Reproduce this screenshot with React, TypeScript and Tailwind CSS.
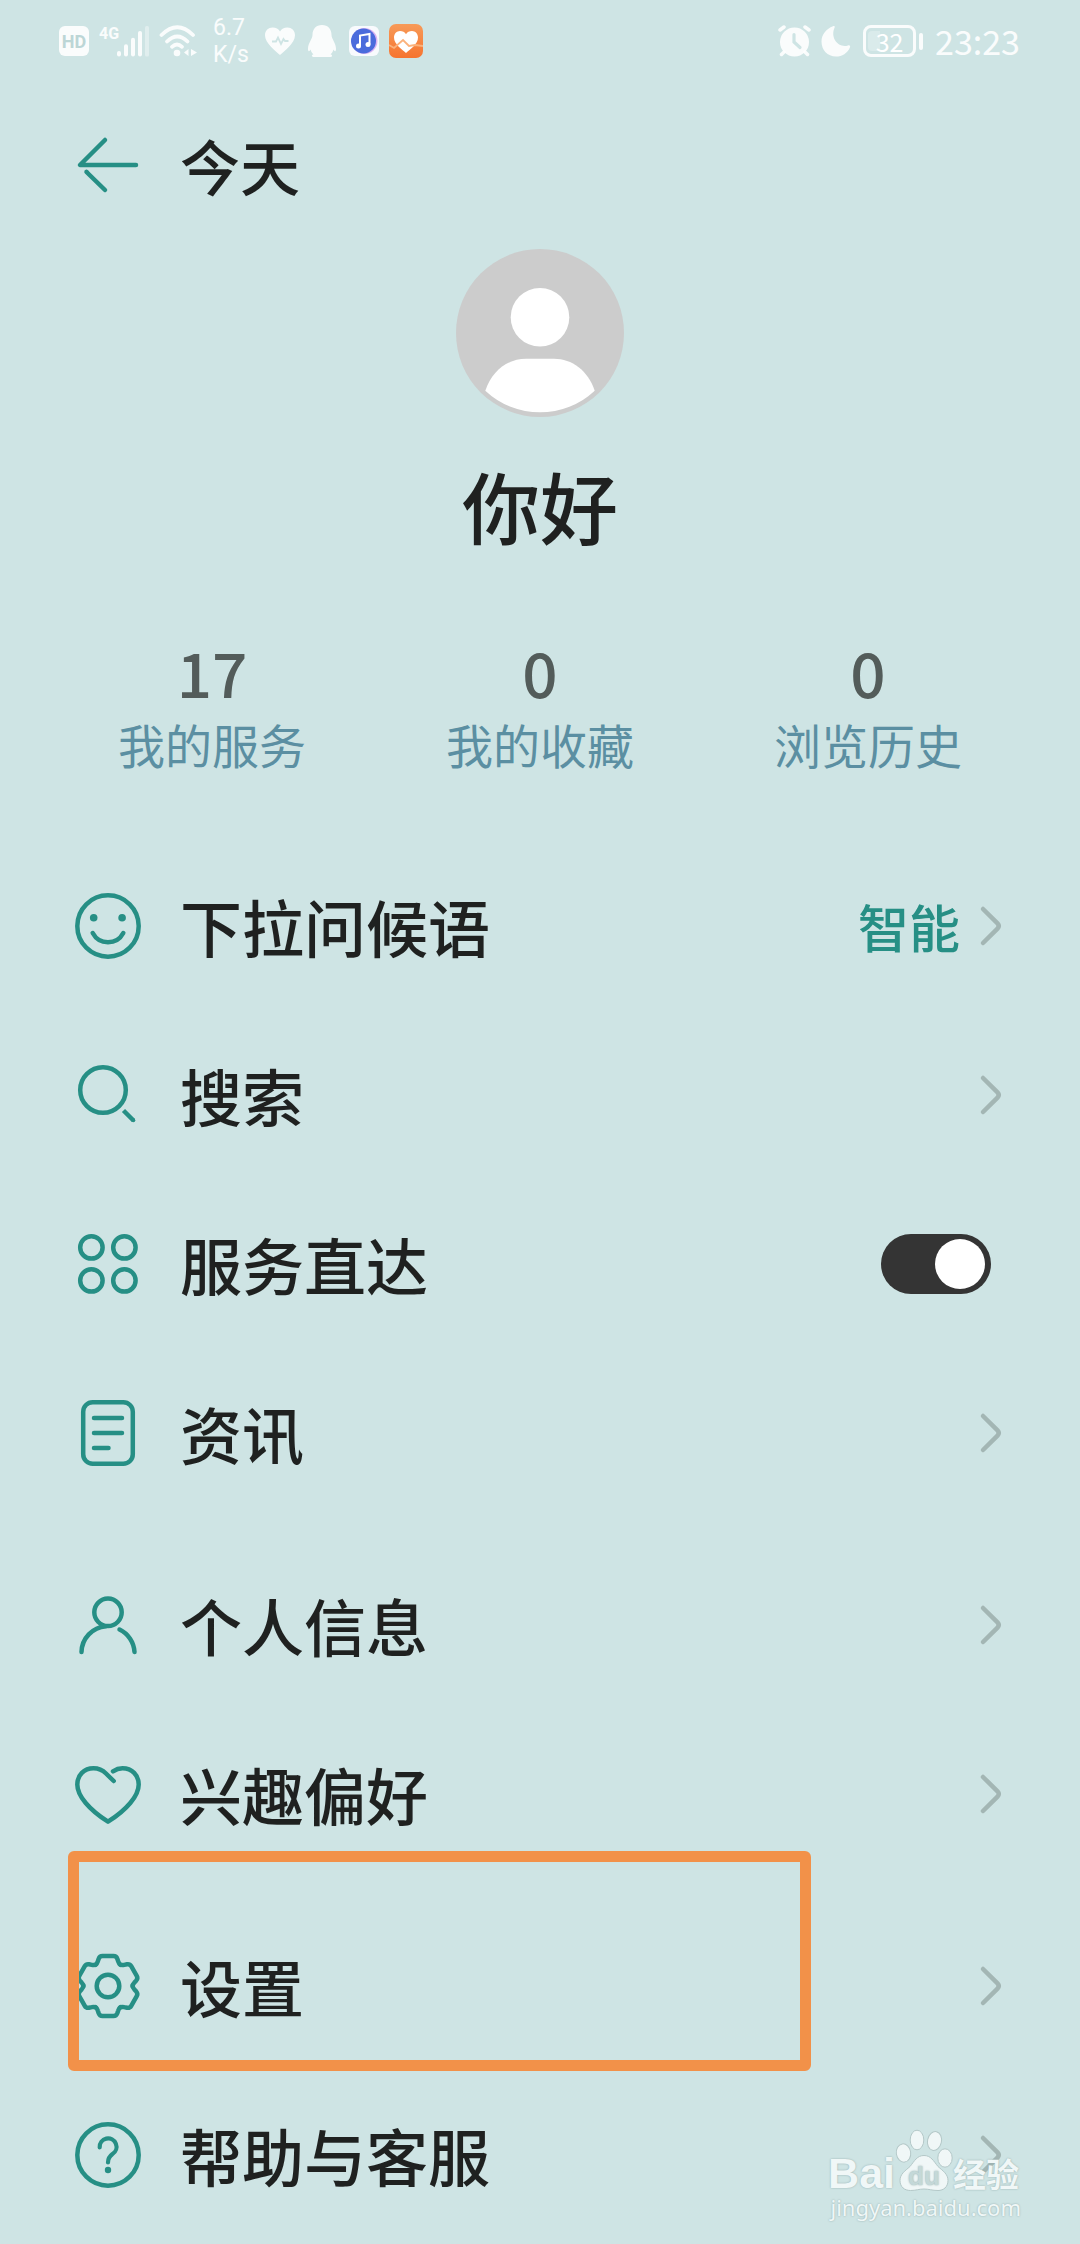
import React, { useState } from "react";

interface Stat {
  label: string;
  count: number;
}

interface MenuItem {
  id: string;
  label: string;
  icon: React.ReactNode;
  value?: string;
  toggle?: boolean;
  highlighted?: boolean;
}

const stats: Stat[] = [
  { label: "我的服务", count: 17 },
  { label: "我的收藏", count: 0 },
  { label: "浏览历史", count: 0 },
];

const LineIcon = ({ children }: { children: React.ReactNode }) => (
  <svg
    viewBox="0 0 72 72"
    className="h-[72px] w-[72px] shrink-0 text-[#268f85]"
    fill="none"
    stroke="currentColor"
    strokeWidth="4.5"
    strokeLinecap="round"
    strokeLinejoin="round"
    aria-hidden="true"
  >
    {children}
  </svg>
);

// One tooth of the gear, repeated every 60 degrees
const GEAR_TOOTH =
  "M-12.5 -21.2Q-10.9 -22.2 -10.2 -24.6L-9.3 -27.3Q-8.3 -30 -5.5 -30H5.5Q8.3 -30 9.3 -27.3L10.2 -24.6Q10.9 -22.2 12.5 -21.2";

const menuGroups: MenuItem[][] = [
  [
    {
      id: "greeting",
      label: "下拉问候语",
      value: "智能",
      icon: (
        <LineIcon>
          <circle cx="36" cy="36" r="30.7" />
          <circle cx="21.7" cy="27.7" r="3.8" fill="currentColor" stroke="none" />
          <circle cx="50.1" cy="27.7" r="3.8" fill="currentColor" stroke="none" />
          <path d="M20.7 43A17.3 17.3 0 0 0 51.3 43" />
        </LineIcon>
      ),
    },
    {
      id: "search",
      label: "搜索",
      icon: (
        <LineIcon>
          <circle cx="31" cy="31" r="22.8" />
          <path d="M51.5 51.5L61.5 61.5" strokeLinecap="butt" />
          <circle cx="61.3" cy="61.3" r="2" fill="currentColor" stroke="none" />
        </LineIcon>
      ),
    },
    {
      id: "direct",
      label: "服务直达",
      toggle: true,
      icon: (
        <LineIcon>
          <circle cx="19.4" cy="19.4" r="11.2" />
          <circle cx="52.4" cy="19.4" r="11.2" />
          <circle cx="19.4" cy="52.4" r="11.2" />
          <circle cx="52.4" cy="52.4" r="11.2" />
        </LineIcon>
      ),
    },
    {
      id: "news",
      label: "资讯",
      icon: (
        <LineIcon>
          <rect x="11.2" y="5.2" width="49.6" height="61.6" rx="9.5" />
          <path d="M22 21H50M22 36H50M22 51H36.5" />
        </LineIcon>
      ),
    },
  ],
  [
    {
      id: "profile",
      label: "个人信息",
      icon: (
        <LineIcon>
          <circle cx="36" cy="23.3" r="13.7" />
          <path d="M9.5 63A26.5 26.5 0 0 1 34 37.2" />
          <path d="M47.5 40.5A26.5 26.5 0 0 1 62.5 63" />
        </LineIcon>
      ),
    },
    {
      id: "interests",
      label: "兴趣偏好",
      icon: (
        <LineIcon>
          <path d="M41.7 23L34 15.5C30.5 12 26.5 10.3 21.5 10.3C12 10.3 5.3 17.3 5.3 26.5C5.3 38 17.5 52 36 63.7C54.5 52 66.7 38 66.7 26.5C66.7 17.3 60 10.3 50.5 10.3C47 10.3 44 11.3 41 13.3" />
        </LineIcon>
      ),
    },
  ],
  [
    {
      id: "settings",
      label: "设置",
      highlighted: true,
      icon: (
        <LineIcon>
          <circle cx="36" cy="36" r="11.3" />
          <g transform="translate(36 36)">
            {[0, 60, 120, 180, 240, 300].map((deg) => (
              <path key={deg} d={GEAR_TOOTH} transform={`rotate(${deg})`} />
            ))}
          </g>
        </LineIcon>
      ),
    },
    {
      id: "help",
      label: "帮助与客服",
      icon: (
        <LineIcon>
          <circle cx="36" cy="36" r="30.7" />
          <path d="M27.7 28.3A8.4 8.4 0 1 1 40.5 35Q36 38.3 36 43.5" strokeWidth="4.2" />
          <circle cx="36" cy="51" r="3.2" fill="currentColor" stroke="none" />
        </LineIcon>
      ),
    },
  ],
];

const StatusBar = () => (
  <div className="flex h-[82px] items-center justify-between pl-[59px] pr-[60px] text-white/90">
    <div className="flex items-center">
      <span className="flex h-[30px] w-[30px] items-center justify-center rounded-md bg-white/90 font-[Roboto] text-[18px] font-bold text-[#bcd6d6]">
        HD
      </span>
      <svg viewBox="0 0 50 32" className="ml-2.5 h-8 w-[50px]" fill="currentColor">
        <text x="0" y="14" fontFamily="Roboto, sans-serif" fontWeight="700" fontSize="16">
          4G
        </text>
        <rect x="18" y="26" width="4" height="5.5" rx="2" />
        <rect x="25" y="19.3" width="4" height="12.2" rx="2" />
        <rect x="32" y="12.8" width="4" height="18.7" rx="2" />
        <rect x="39" y="6" width="4" height="25.5" rx="2" />
        <rect x="46" y="1" width="4" height="30.5" rx="1.5" opacity="0.4" />
      </svg>
      <svg
        viewBox="0 0 40 32"
        className="ml-2.5 h-8 w-10"
        fill="none"
        stroke="currentColor"
        strokeWidth="3.8"
        strokeLinecap="round"
      >
        <path d="M2.5 10Q18.3 -5.5 34 10" />
        <path d="M8 16.5Q18.3 6.5 28.5 16.5" />
        <path d="M13 21.8Q18 17.2 23 21.8" />
        <circle cx="18" cy="28" r="3.3" fill="currentColor" stroke="none" />
        <path d="M29.5 24v7L25 27.5zM32 24v7L38 27.5z" fill="currentColor" stroke="none" />
      </svg>
      <p className="ml-3.5 w-[34px] whitespace-nowrap font-[Roboto] text-[23px] leading-[27px]">
        6.7
        <br />
        K/s
      </p>
      <svg viewBox="0 0 30 28" className="ml-[18px] h-7 w-[30px]">
        <path
          d="M15 28C11 24 0 16.5 0 8.2C0 3.5 3.5 0.5 7.5 0.5C11 0.5 13.5 2 15 4.5C16.5 2 19 0.5 22.5 0.5C26.5 0.5 30 3.5 30 8.2C30 16.5 19 24 15 28Z"
          fill="currentColor"
        />
        <path
          d="M7 14.5H11L13 10.5L16 17L18.5 12L20 14H23.5"
          fill="none"
          stroke="#cee4e4"
          strokeWidth="1.8"
        />
      </svg>
      <svg viewBox="0 0 28 32" className="ml-[13px] h-8 w-7" fill="currentColor">
        <path d="M14 0C8 0 4.5 4 4.5 10C4.5 14 0 18 0 24C0 26.5 1.2 27 2.6 24.5C3.2 27 4.3 28.3 5.5 29.3C3.3 30 3.5 32 5.5 32H22.5C24.5 32 24.7 30 22.5 29.3C23.7 28.3 24.8 27 25.4 24.5C26.8 27 28 26.5 28 24C28 18 23.5 14 23.5 10C23.5 4 20 0 14 0Z" />
      </svg>
      <svg viewBox="0 0 30 30" className="ml-[13px] h-[30px] w-[30px]">
        <rect width="30" height="30" rx="6" fill="#f8fafd" />
        <circle cx="15.5" cy="15" r="13" fill="#d9b3f2" />
        <circle cx="14.5" cy="15" r="12.5" fill="#4a6bdc" />
        <path d="M11 20V9.5L20.5 8V18.5" fill="none" stroke="#fff" strokeWidth="2" />
        <circle cx="9.5" cy="20" r="2.5" fill="#fff" />
        <circle cx="19" cy="18.5" r="2.5" fill="#fff" />
      </svg>
      <svg viewBox="0 0 34 34" className="ml-2.5 h-[34px] w-[34px]">
        <defs>
          <linearGradient id="health" x1="0" y1="0" x2="0" y2="1">
            <stop offset="0" stopColor="#f79a58" />
            <stop offset="1" stopColor="#f6742f" />
          </linearGradient>
        </defs>
        <rect width="34" height="34" rx="7" fill="url(#health)" />
        <path
          d="M17 29C13 25.5 5 20 5 13.5C5 9.8 7.8 7 11 7C13.6 7 15.8 8.2 17 10.2C18.2 8.2 20.4 7 23 7C26.2 7 29 9.8 29 13.5C29 20 21 25.5 17 29Z"
          fill="#fff"
        />
        <path
          d="M0 21L5 24L14 16L20 22L26 21L34 22"
          fill="none"
          stroke="#fbb27c"
          strokeWidth="1.8"
        />
      </svg>
    </div>

    <div className="flex items-center">
      <svg
        viewBox="0 0 33 32"
        className="h-8 w-[33px]"
        fill="none"
        stroke="currentColor"
        strokeWidth="3.5"
        strokeLinecap="round"
      >
        <circle cx="16.5" cy="17" r="14.5" fill="currentColor" stroke="none" />
        <path d="M2 5L6 2M31 5L27 2M6 27L3.5 29.5M27 27L29.5 29.5" />
        <path d="M16 9.5V17L22 22.5" stroke="#cee4e4" strokeWidth="3.2" />
      </svg>
      <svg viewBox="0 0 30 32" className="ml-2.5 h-8 w-[30px]" fill="currentColor">
        <path d="M12 1.2C13.5 0.5 14.3 1.3 13.5 2.8C9 13 17.5 23.5 27 20.5C28.5 20 29.5 20.8 29 22.2C26.5 28.3 21 31.5 15 31.5C6.5 31.5 0.5 25 0.5 16.5C0.5 9.5 5.5 3.5 12 1.2Z" />
      </svg>
      <div className="ml-3 flex items-center gap-[3px]">
        <div className="relative flex h-8 w-[53px] items-center justify-center rounded-lg border-[3px] border-white/90">
          <span className="absolute left-[2px] h-5 w-3 rounded-l bg-white/25" />
          <span className="relative text-[25px] leading-8 text-white">32</span>
        </div>
        <span className="h-[17px] w-1 rounded-full bg-white/90" />
      </div>
      <time className="ml-3 text-[34px] leading-10">23:23</time>
    </div>
  </div>
);

const Avatar = () => (
  <svg viewBox="0 0 168 168" className="h-[168px] w-[168px]" role="img" aria-label="头像">
    <circle cx="84" cy="84" r="84" fill="#cccccc" />
    <circle cx="84" cy="68.3" r="29.3" fill="#fff" />
    <path
      d="M29.3 141.7C36 121.5 52 109.7 70 109.7H98C116 109.7 132 121.5 138.7 141.7A80 80 0 0 1 29.3 141.7Z"
      fill="#fff"
    />
  </svg>
);

const Chevron = () => (
  <svg
    viewBox="0 0 36 72"
    className="h-[72px] w-9 shrink-0 text-[#a3b6b4]"
    fill="none"
    stroke="currentColor"
    strokeWidth="4.5"
    strokeLinecap="round"
    aria-hidden="true"
  >
    <path d="M11 19L25.5 33.3Q28 36 25.5 38.7L11 53" />
  </svg>
);

const Watermark = () => (
  <div className="pointer-events-none absolute bottom-[25px] right-[59px] flex flex-col items-end text-[#f0f7f7] [text-shadow:0_0_2px_#8fa8a8]">
    <div className="flex h-[64px] items-end pr-[2px]">
      <span className="font-['Liberation_Sans'] text-[43px] font-bold leading-[40px]">Bai</span>
      <svg viewBox="0 0 58 64" className="h-16 w-[58px]">
        <g fill="#f0f7f7" stroke="#b4c8c8" strokeWidth="1">
          <ellipse cx="8.5" cy="24" rx="7.2" ry="9.2" transform="rotate(-8 8.5 24)" />
          <ellipse cx="22" cy="11" rx="6.8" ry="9.8" />
          <ellipse cx="39.5" cy="12" rx="7" ry="9.5" transform="rotate(12 39.5 12)" />
          <ellipse cx="50" cy="29" rx="7.2" ry="9.2" />
          <path d="M29 26.5C36 26.5 38.5 32 43 37.5C48 42 53 45 53 51.5C53 58 48.5 61.5 43 61.5C37 61.5 34 60 29 60C24 60 21 61.5 15.5 61.5C9.5 61.5 5 58 5 51.5C5 45 10 42 15 37.5C19.5 32 22 26.5 29 26.5Z" />
        </g>
        <text
          x="29"
          y="56"
          textAnchor="middle"
          fontFamily="Liberation Sans, sans-serif"
          fontWeight="700"
          fontSize="26"
          fill="#c4d8d8"
        >
          du
        </text>
      </svg>
      <span className="text-[33px] font-bold leading-[40px]">经验</span>
    </div>
    <span className="mt-[2px] font-['Noto_Sans'] text-[22px] leading-6">jingyan.baidu.com</span>
  </div>
);

const MenuRow = ({ item }: { item: MenuItem }) => {
  const [enabled, setEnabled] = useState<boolean>(true);

  const content = (
    <>
      {item.icon}
      <span className="ml-9 flex-1 text-left text-[62px] font-medium leading-[84px] text-[#1f2120]">
        {item.label}
      </span>
    </>
  );

  return (
    <li className="relative">
      {item.toggle ? (
        <label className="flex h-[169px] w-full items-center px-[72px]">
          {content}
          <input
            type="checkbox"
            role="switch"
            checked={enabled}
            onChange={() => setEnabled(!enabled)}
            className="mr-[17px] flex h-[60px] w-[110px] appearance-none items-center rounded-full bg-gray-400 px-[6px] before:h-[50px] before:w-[50px] before:rounded-full before:bg-white checked:justify-end checked:bg-[#343434]"
          />
        </label>
      ) : (
        <button type="button" className="flex h-[169px] w-full items-center px-[72px]">
          {content}
          {item.value && (
            <span className="mr-3 text-[51px] font-medium leading-[72px] text-[#268f85]">
              {item.value}
            </span>
          )}
          <Chevron />
        </button>
      )}
      {item.highlighted && (
        <span className="pointer-events-none absolute -top-[50px] -bottom-px left-[68px] w-[743px] rounded-md border-[11px] border-[#f29149]" />
      )}
    </li>
  );
};

const App: React.FC = () => {
  return (
    <div className="relative min-h-screen bg-[#cee4e4] font-['Noto_Sans_CJK_SC',sans-serif]">
      <StatusBar />

      <header className="flex h-[165px] items-center px-[72px]">
        <button type="button" aria-label="返回">
          <LineIcon>
            <path d="M33 11L8 36H64" />
            <path d="M14.5 43L33 61" />
            <path d="M12 41.3H16L18 44" stroke="none" fill="currentColor" />
          </LineIcon>
        </button>
        <h1 className="ml-9 text-[60px] font-medium leading-[84px] text-[#1f2120]">今天</h1>
      </header>

      <main className="pt-[2px]">
        <section className="flex flex-col items-center">
          <Avatar />
          <h2 className="mt-9 text-[78px] font-medium leading-[104px] text-[#1f2120]">你好</h2>
        </section>

        <section className="mt-[78px] grid grid-cols-3 px-12">
          {stats.map((stat) => (
            <a key={stat.label} href="#" className="flex flex-col items-center">
              <span className="text-[62px] font-medium leading-[72px] text-[#535c5a]">
                {stat.count}
              </span>
              <span className="mt-[9px] text-[47px] leading-[56px] text-[#5b8fa2]">
                {stat.label}
              </span>
            </a>
          ))}
        </section>

        <nav className="mt-[69px] flex flex-col gap-[23px]">
          {menuGroups.map((group, index) => (
            <ul key={index}>
              {group.map((item) => (
                <MenuRow key={item.id} item={item} />
              ))}
            </ul>
          ))}
        </nav>
      </main>

      <Watermark />
    </div>
  );
};

export default App;
